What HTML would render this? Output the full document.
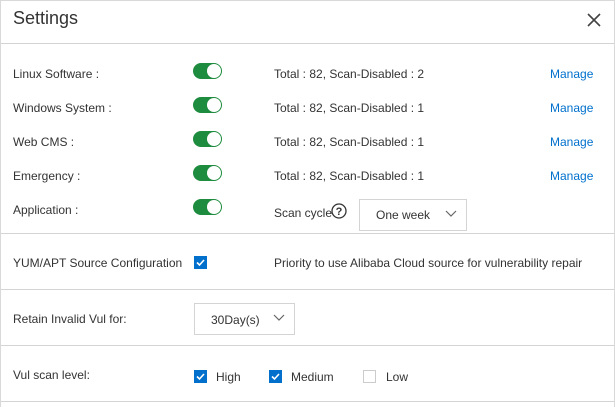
<!DOCTYPE html>
<html><head><style>
*{margin:0;padding:0;box-sizing:border-box}
body{width:615px;height:407px;background:#fff;font-family:"Liberation Sans",sans-serif;font-size:12px;color:#333;position:relative;overflow:hidden}
.frame{position:absolute;left:0;top:0;width:615px;height:407px;border:1px solid #d9d9d9;border-bottom:none}
.a{position:absolute;white-space:nowrap}
.hr{position:absolute;left:1px;right:1px;height:1px;background:#d4d4d4}
.tg{position:absolute;left:193px;width:29px;height:16px;border-radius:8px;background:#1e8c3e}
.tg:after{content:"";position:absolute;right:1px;top:1px;width:14px;height:14px;border-radius:7px;background:#fff}
.m{color:#0070cc}
.cb{position:absolute;width:13px;height:13px;background:#0070cc}
.cb svg{position:absolute;left:0;top:0}
.sel{position:absolute;border:1px solid #d4d4d4;background:#fff}
</style></head><body>
<div class="frame"></div>
<div class="a" style="left:13px;top:8px;font-size:18px;color:#333">Settings</div>
<svg class="a" style="left:586px;top:12px" width="16" height="16" viewBox="0 0 16 16"><path d="M2 2L14 14M14 2L2 14" stroke="#444" stroke-width="1.6"/></svg>
<div class="hr" style="top:43px"></div>

<div class="a" style="left:13px;top:67px">Linux Software :</div>
<div class="tg" style="top:63px"></div>
<div class="a" style="left:274px;top:67px">Total : 82, Scan-Disabled : 2</div>
<div class="a m" style="left:550px;top:67px">Manage</div>

<div class="a" style="left:13px;top:101px">Windows System :</div>
<div class="tg" style="top:97px"></div>
<div class="a" style="left:274px;top:101px">Total : 82, Scan-Disabled : 1</div>
<div class="a m" style="left:550px;top:101px">Manage</div>

<div class="a" style="left:13px;top:135px">Web CMS :</div>
<div class="tg" style="top:131px"></div>
<div class="a" style="left:274px;top:135px">Total : 82, Scan-Disabled : 1</div>
<div class="a m" style="left:550px;top:135px">Manage</div>

<div class="a" style="left:13px;top:169px">Emergency :</div>
<div class="tg" style="top:165px"></div>
<div class="a" style="left:274px;top:169px">Total : 82, Scan-Disabled : 1</div>
<div class="a m" style="left:550px;top:169px">Manage</div>

<div class="a" style="left:13px;top:203px">Application :</div>
<div class="tg" style="top:199px"></div>
<div class="a" style="left:274px;top:206px">Scan cycle</div>
<svg class="a" style="left:331px;top:203px" width="16" height="16" viewBox="0 0 16 16"><circle cx="8" cy="8" r="7" fill="none" stroke="#333" stroke-width="1.3"/><text x="8" y="12" font-size="11" text-anchor="middle" font-family="Liberation Sans" font-weight="bold" fill="#333">?</text></svg>
<div class="sel" style="left:359px;top:199px;width:108px;height:32px"></div>
<div class="a" style="left:376px;top:208px">One week</div>
<svg class="a" style="left:445px;top:210px" width="12" height="8" viewBox="0 0 12 8"><path d="M1 1L6 6L11 1" stroke="#666" fill="none" stroke-width="1.2"/></svg>

<div class="hr" style="top:233px"></div>
<div class="a" style="left:13px;top:256px">YUM/APT Source Configuration</div>
<div class="cb" style="left:194px;top:256px"><svg width="13" height="13"><path d="M3 6.5L5.5 9L10 4" stroke="#fff" fill="none" stroke-width="1.6"/></svg></div>
<div class="a" style="left:274px;top:256px">Priority to use Alibaba Cloud source for vulnerability repair</div>

<div class="hr" style="top:289px"></div>
<div class="a" style="left:13px;top:312px">Retain Invalid Vul for:</div>
<div class="sel" style="left:194px;top:303px;width:101px;height:32px"></div>
<div class="a" style="left:211px;top:313px">30Day(s)</div>
<svg class="a" style="left:273px;top:314px" width="12" height="8" viewBox="0 0 12 8"><path d="M1 1L6 6L11 1" stroke="#666" fill="none" stroke-width="1.2"/></svg>

<div class="hr" style="top:345px"></div>
<div class="a" style="left:13px;top:368px">Vul scan level:</div>
<div class="cb" style="left:194px;top:370px"><svg width="13" height="13"><path d="M3 6.5L5.5 9L10 4" stroke="#fff" fill="none" stroke-width="1.6"/></svg></div>
<div class="a" style="left:216px;top:370px">High</div>
<div class="cb" style="left:269px;top:370px"><svg width="13" height="13"><path d="M3 6.5L5.5 9L10 4" stroke="#fff" fill="none" stroke-width="1.6"/></svg></div>
<div class="a" style="left:291px;top:370px">Medium</div>
<div class="cb" style="left:363px;top:370px;background:#fff;border:1px solid #ccc"></div>
<div class="a" style="left:386px;top:370px">Low</div>
<div class="hr" style="top:401px"></div>
</body></html>
